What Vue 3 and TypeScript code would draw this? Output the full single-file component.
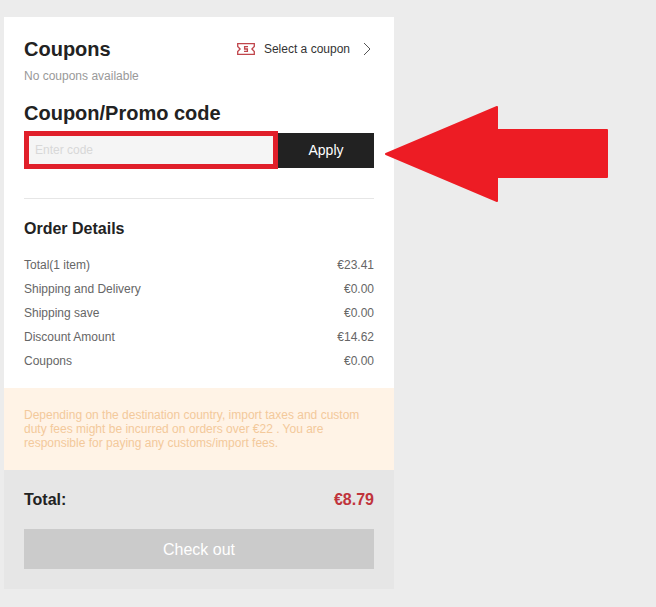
<script setup lang="ts">
const rows: { label: string; value: string }[] = [
  { label: 'Total(1 item)', value: '€23.41' },
  { label: 'Shipping and Delivery', value: '€0.00' },
  { label: 'Shipping save', value: '€0.00' },
  { label: 'Discount Amount', value: '€14.62' },
  { label: 'Coupons', value: '€0.00' },
]
</script>

<template>
  <div class="page">
    <div class="card">
      <section class="top">
        <div class="head">
          <h2 class="title">Coupons</h2>
          <div class="select">
            <svg class="ticket" width="18" height="12" viewBox="0 0 18 12" fill="none" stroke="#c0454b" stroke-width="1.3">
              <path d="M.7.7H17.3V3.4L14.9 6l2.4 2.6v2.7H.7V8.6L3.1 6 .7 3.4z" />
              <path d="M11 3.7H7.6V6h2.8v2.3H7" />
            </svg>
            <span class="select-text">Select a coupon</span>
            <svg class="chev" width="8" height="14" viewBox="0 0 8 14" fill="none" stroke="#555" stroke-width="1">
              <path d="M1 1l6 6-6 6" />
            </svg>
          </div>
        </div>
        <p class="none">No coupons available</p>
        <h2 class="promo">Coupon/Promo code</h2>
        <div class="code">
          <div class="field">Enter code</div>
          <div class="apply">Apply</div>
        </div>
      </section>
      <section class="details">
        <h3 class="details-title">Order Details</h3>
        <div v-for="r in rows" :key="r.label" class="row">
          <span>{{ r.label }}</span>
          <span>{{ r.value }}</span>
        </div>
      </section>
      <div class="notice">
        Depending on the destination country, import taxes and custom duty fees might be incurred on orders over €22 . You are responsible for paying any customs/import fees.
      </div>
      <div class="summary">
        <div class="total">
          <span>Total:</span>
          <span class="amount">€8.79</span>
        </div>
        <div class="checkout">Check out</div>
      </div>
    </div>
    <svg class="arrow" width="226" height="100" viewBox="0 0 226 100" fill="#ed1c24" stroke="#ed1c24" stroke-width="2" stroke-linejoin="round">
      <path d="M3 50 L114 3 V26 H224 V73 H114 V97 Z" />
    </svg>
  </div>
</template>

<style scoped>
.page {
  position: relative;
  width: 656px;
  height: 607px;
  padding: 17px 0 0 4px;
  box-sizing: border-box;
  background: #ececec;
  font-family: "Liberation Sans", Arial, sans-serif;
  overflow: hidden;
}
.card {
  width: 390px;
  background: #fff;
}
.top {
  padding: 20px 20px 0;
}
.head {
  display: flex;
  justify-content: space-between;
  align-items: center;
  height: 24px;
}
.title {
  margin: 0;
  font-size: 20px;
  line-height: 24px;
  font-weight: 700;
  color: #222;
}
.select {
  display: flex;
  align-items: center;
  font-size: 12px;
  color: #333;
  padding-right: 3px;
}
.ticket {
  margin-right: 9px;
}
.select-text {
  margin-right: 13px;
}
.none {
  margin: 8px 0 0;
  font-size: 12px;
  line-height: 14px;
  color: #999;
}
.promo {
  margin: 18px 0 0;
  font-size: 20px;
  line-height: 24px;
  font-weight: 700;
  color: #222;
}
.code {
  display: flex;
  margin-top: 8px;
  height: 35px;
}
.field {
  box-sizing: border-box;
  width: 254px;
  height: 38px;
  margin-top: -2px;
  border: 5px solid #e01f2a;
  background: #f5f5f5;
  color: #d8d8d8;
  font-size: 12px;
  line-height: 28px;
  padding-left: 6px;
}
.apply {
  flex: 1;
  background: #222;
  color: #fff;
  font-size: 14px;
  line-height: 35px;
  text-align: center;
}
.details {
  margin: 30px 20px 0;
  padding: 20px 0 15px;
  border-top: 1px solid #e6e6e6;
}
.details-title {
  margin: 0 0 14px;
  font-size: 16px;
  line-height: 20px;
  font-weight: 700;
  color: #222;
}
.row {
  display: flex;
  justify-content: space-between;
  font-size: 12px;
  line-height: 24px;
  color: #666;
}
.notice {
  box-sizing: border-box;
  height: 82px;
  padding: 20px 20px 0;
  background: #fff3e6;
  color: #f3c99b;
  font-size: 12px;
  line-height: 14px;
}
.summary {
  padding: 0 20px 20px;
  background: #e6e6e6;
}
.total {
  display: flex;
  justify-content: space-between;
  align-items: center;
  height: 59px;
  font-size: 16px;
  font-weight: 700;
  color: #222;
}
.amount {
  color: #c0343c;
}
.checkout {
  height: 40px;
  background: #cbcbcb;
  color: #fff;
  font-size: 16px;
  line-height: 42px;
  text-align: center;
}
.arrow {
  position: absolute;
  left: 383px;
  top: 104px;
}
</style>
